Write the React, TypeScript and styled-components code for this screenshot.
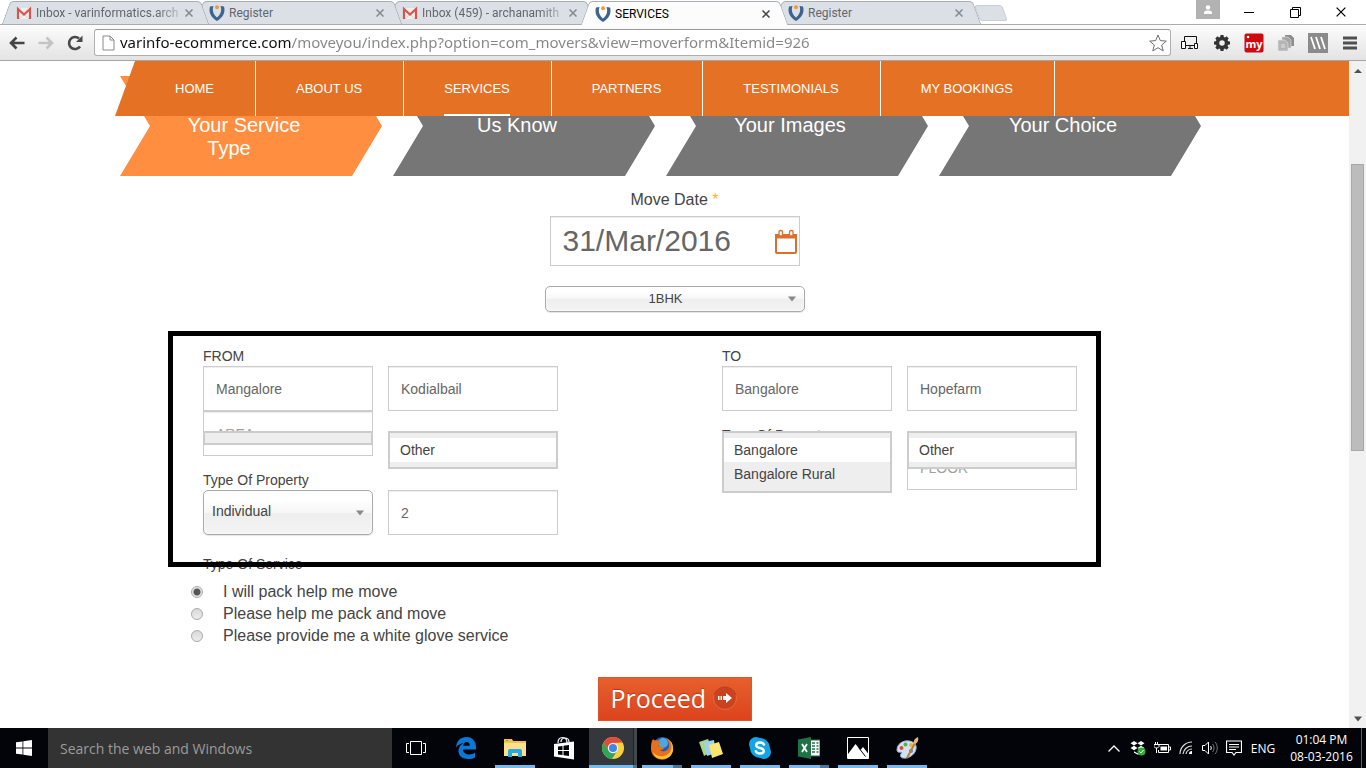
import React from "react";
import styled, { createGlobalStyle, css } from "styled-components";

const UI = `"Open Sans", "Noto Sans", sans-serif`;
const ARIAL = `"Liberation Sans", Arial, sans-serif`;

const GlobalStyle = createGlobalStyle`
  *, *::before, *::after { box-sizing: border-box; }
  body { margin: 0; background: #fff; font-family: ${ARIAL}; color: #444; }
  button, input, select { font: inherit; color: inherit; margin: 0; }
  button { border: 0; padding: 0; background: none; cursor: pointer; }
  svg { display: block; flex: none; }
`;

const Shell = styled.div`
  display: flex;
  flex-direction: column;
  min-height: 100vh;
  overflow: hidden;
`;

/* ---------- browser chrome ---------- */

const TabStrip = styled.div`
  display: flex;
  height: 25px;
  padding-left: 2px;
  background: #fff;
  border-bottom: 1px solid #aaabad;
  font-family: Roboto, sans-serif;
`;

const edge = css`
  content: "";
  position: absolute;
  top: 1px;
  bottom: 0;
  z-index: -1;
  background: var(--tab);
  border: 1px solid #a9adb2;
  border-bottom: 0;
`;

const Tab = styled.div<{ $active?: boolean; $order: number }>`
  --tab: ${(p) => (p.$active ? "#fcfcfc" : "#dbe0e7")};
  position: relative;
  z-index: ${(p) => p.$order};
  display: flex;
  align-items: center;
  flex: 0 1 207px;
  min-width: 0;
  height: ${(p) => (p.$active ? 25 : 24)}px;
  margin-right: -14px;
  padding: 2px 14px 0;
  gap: 4px;
  isolation: isolate;
  font-size: 12px;
  color: ${(p) => (p.$active ? "#000" : "#63666a")};

  &::before {
    ${edge}
    left: 4px;
    width: 60%;
    border-right: 0;
    border-top-left-radius: 4px;
    transform: skewX(-20deg);
  }
  &::after {
    ${edge}
    right: 4px;
    width: 60%;
    border-left: 0;
    border-top-right-radius: 4px;
    transform: skewX(20deg);
  }
`;

const TabTitle = styled.span<{ $fade?: boolean }>`
  flex: 1;
  white-space: nowrap;
  line-height: 16px;
  mask-image: ${(p) => (p.$fade ? "linear-gradient(to right, #000 85%, rgba(0, 0, 0, 0.3))" : "none")};
`;

const TabClose = styled.button`
  display: grid;
  place-items: center;
  width: 16px;
  height: 16px;
`;

const NewTab = styled.button`
  width: 28px;
  height: 16px;
  margin: 5px 0 0 10px;
  background: #dbe0e7;
  border: 1px solid #c9ced5;
  border-radius: 3px;
  transform: skewX(20deg);
`;

const WindowButtons = styled.div`
  display: flex;
  margin: 0 2px 0 auto;
`;

const WindowButton = styled.button`
  display: grid;
  place-items: center;
  width: 46px;
  height: 24px;
`;

const UserBadge = styled.button`
  display: grid;
  place-items: center;
  width: 24px;
  height: 19px;
  margin-right: 6px;
  background: #b2b2b2;
`;

const Toolbar = styled.div`
  display: flex;
  align-items: center;
  height: 36px;
  padding: 0 6px 0 8px;
  background: linear-gradient(#fcfcfc, #e3e3e3);
  border-bottom: 1px solid #a5a5a5;
`;

const NavButtons = styled.div`
  display: flex;
  gap: 11px;
  margin-right: 10px;
`;

const IconButton = styled.button`
  display: grid;
  place-items: center;
  width: 18px;
  height: 20px;
`;

const Omnibox = styled.div`
  display: flex;
  flex: 1;
  align-items: center;
  gap: 5px;
  height: 27px;
  padding: 0 3px 0 7px;
  background: #fff;
  border: 1px solid #b0b0b0;
  border-top-color: #999;
  border-radius: 3px;
`;

const Url = styled.input`
  flex: 1;
  min-width: 0;
  height: 24px;
  padding: 0 0 2px;
  border: 0;
  outline: 0;
  font-family: "Noto Sans", sans-serif;
  font-size: 15px;
  color: transparent;
  background: linear-gradient(to right, #111 171px, #858585 171px);
  -webkit-background-clip: text;
  background-clip: text;
`;

const Extensions = styled.div`
  display: flex;
  gap: 12px;
  margin-left: 9px;
`;

const ExtButton = styled.button`
  display: grid;
  place-items: center;
  width: 20px;
  height: 20px;
`;

/* ---------- page ---------- */

const Viewport = styled.div`
  display: flex;
  flex: 1;
`;

const Page = styled.main`
  flex: 1;
  min-width: 0;
`;

const Scrollbar = styled.div`
  display: flex;
  flex-direction: column;
  align-items: center;
  width: 17px;
  padding: 7px 0 6px;
  background: #f1f1f1;
`;

const Thumb = styled.div`
  flex: 287;
  width: 13px;
  background: #bcbcbc;
  border: 1px solid #a8a8a8;
`;

const Gap = styled.div<{ $share: number }>`
  flex: ${(p) => p.$share};
`;

const SiteNav = styled.nav`
  position: relative;
  z-index: 2;
  display: flex;
  height: 55px;
  margin-left: 115px;
  padding-left: 20px;
  background: #e57125;
  clip-path: polygon(20px 0, 100% 0, 100% 100%, 0 100%);
`;

const NavItem = styled.div`
  padding: 0 41px 0 40px;
  border-right: 1px solid #fff;
`;

const NavLink = styled.a<{ $current?: boolean }>`
  display: block;
  height: 55px;
  font-size: 13px;
  line-height: 55px;
  color: #fff;
  text-decoration: none;
  white-space: nowrap;
  border-bottom: 2px solid ${(p) => (p.$current ? "#fff" : "transparent")};
`;

const Steps = styled.ol`
  display: grid;
  grid-template-columns: repeat(4, 1fr);
  gap: 11px;
  margin: -40px 148px 0 120px;
  padding: 0;
  list-style: none;
`;

const Step = styled.li<{ $current?: boolean }>`
  height: 100px;
  padding: 38px 14px 0 0;
  background: ${(p) => (p.$current ? "#ff8e40" : "#767676")};
  clip-path: polygon(0 0, calc(100% - 30px) 0, 100% 50%, calc(100% - 30px) 100%, 0 100%, 30px 50%);
  font-size: 20px;
  line-height: 23px;
  text-align: center;
  color: #fff;
`;

const StepTail = styled.span`
  display: block;
  padding-right: 30px;
`;

const MoveBlock = styled.div`
  display: flex;
  flex-direction: column;
  align-items: center;
  margin-top: 14px;
`;

const MoveLabel = styled.label`
  font-size: 16px;
  line-height: 20px;
`;

const Required = styled.span`
  color: #ffb02e;
`;

const DateField = styled.div`
  display: flex;
  align-items: center;
  width: 250px;
  height: 50px;
  margin: 6px 0 20px;
  padding: 2px 1px 0 12px;
  background: #fff;
  border: 1px solid #ccc;
  box-shadow: inset 0 1px 1px #eee;
`;

const DateInput = styled.input`
  flex: 1;
  min-width: 0;
  height: 46px;
  padding: 0 0 2px;
  border: 0;
  outline: 0;
  background: transparent;
  font-size: 30px;
  color: #666;
`;

const SelectBox = styled.div<{ $large?: boolean }>`
  display: grid;
  align-items: center;
  width: ${(p) => (p.$large ? "auto" : "260px")};
  height: ${(p) => (p.$large ? 45 : 26)}px;
  background: linear-gradient(#fff 20%, #f6f6f6 50%, #eee 52%, #f4f4f4 100%);
  border: 1px solid #aaa;
  border-radius: 5px;
  box-shadow: inset 0 0 3px #fff, 0 1px 1px rgba(0, 0, 0, 0.1);

  > * { grid-area: 1 / 1; }
  > svg {
    justify-self: end;
    margin-right: 8px;
    pointer-events: none;
  }
`;

const Select = styled.select<{ $center?: boolean }>`
  appearance: none;
  width: 100%;
  height: 24px;
  padding: ${(p) => (p.$center ? "0 18px 2px 0" : "0 20px 4px 8px")};
  border: 0;
  outline: 0;
  background: transparent;
  font-size: ${(p) => (p.$center ? 13 : 14)}px;
  text-align-last: ${(p) => (p.$center ? "center" : "left")};
`;

const RouteFrame = styled.section`
  position: relative;
  z-index: 1;
  display: flex;
  justify-content: space-between;
  margin: 19px 248px 0 168px;
  padding: 10px 19px 27px 30px;
  border: 5px solid #000;
`;

const Place = styled.div`
  display: flex;
  flex-direction: column;
  gap: 14px;
  width: 355px;
`;

const FieldGrid = styled.div`
  display: grid;
  grid-template-columns: 1fr 1fr;
  column-gap: 15px;
`;

const FieldLabel = styled.label`
  grid-column: 1 / -1;
  font-size: 14px;
  line-height: 20px;
`;

const Field = styled.div`
  position: relative;
`;

const TextInput = styled.input`
  display: block;
  width: 100%;
  height: 45px;
  padding: 0 12px;
  background: #fff;
  border: 1px solid #ccc;
  border-radius: 0;
  outline: 0;
  box-shadow: inset 0 1px 1px #eee;
  font-size: 14px;
  color: #666;
  &::placeholder { color: #a0a0a0; }
`;

const Suggestions = styled.ul<{ $empty?: boolean }>`
  position: absolute;
  top: ${(p) => (p.$empty ? 20 : 65)}px;
  left: 0;
  right: 0;
  z-index: 3;
  margin: 0;
  padding: 5px 0;
  list-style: none;
  background: #eee;
  border: 2px solid #ccc;
`;

const Suggestion = styled.li<{ $hot?: boolean }>`
  padding: 0 10px;
  background: ${(p) => (p.$hot ? "#fff" : "#eee")};
  font-size: 14px;
  line-height: 24px;
  color: #444;
`;

const ServiceGroup = styled.fieldset`
  display: flex;
  flex-direction: column;
  min-width: 0;
  margin: -13px 248px 0 168px;
  padding: 0 0 0 23px;
  border: 0;
`;

const ServiceTitle = styled.legend`
  padding: 0 0 7px 12px;
  font-size: 14px;
  line-height: 20px;
`;

const RadioRow = styled.label`
  display: flex;
  align-items: center;
  gap: 20px;
  font-size: 16px;
  line-height: 22px;
`;

const Radio = styled.input`
  appearance: none;
  width: 12px;
  height: 12px;
  border: 1px solid #aaa;
  border-radius: 50%;
  background: linear-gradient(#d9d9d9, #ececec);
  &:checked {
    background: radial-gradient(circle, #555 0 3px, #e4e4e4 4px);
  }
`;

const Proceed = styled.button`
  display: flex;
  align-items: center;
  gap: 6px;
  width: 154px;
  height: 44px;
  margin: 30px auto 7px;
  padding: 0 0 2px 12px;
  background: linear-gradient(#e6602c, #dc431e);
  border: 1px solid #e0562c;
  font-family: ${UI};
  font-size: 25px;
  line-height: 40px;
  color: #fff;
  text-shadow: 0 -1px 1px #b4371a;
`;

/* ---------- taskbar ---------- */

const Taskbar = styled.footer`
  display: flex;
  height: 40px;
  background: #02040a;
  font-family: ${UI};
  color: #fff;
`;

const TaskButton = styled.button<{ $running?: boolean; $active?: boolean; $stacked?: boolean }>`
  display: flex;
  flex-direction: column;
  align-items: center;
  justify-content: flex-start;
  width: 48px;
  height: 40px;
  margin-right: 1px;
  background: ${(p) => (p.$active ? "linear-gradient(to right, #34373c 44px, #1d2024 44px 45px, #43474c 45px)" : "none")};
  &::after {
    content: "";
    width: ${(p) => (p.$active ? 48 : 40)}px;
    height: 3px;
    background: ${(p) =>
      !p.$running
        ? "none"
        : p.$stacked
        ? "linear-gradient(to right, #76b9ed 31px, #4b7698 31px)"
        : p.$active
        ? "linear-gradient(to right, #76b9ed 44px, #4b7698 44px)"
        : "#76b9ed"};
  }
`;

const TaskIcon = styled.span`
  display: grid;
  place-items: center;
  width: 26px;
  height: 26px;
  margin: 7px 0 4px;
`;

const StartButton = styled.button`
  display: grid;
  place-items: center;
  width: 48px;
`;

const Search = styled.input`
  flex: 0 1 344px;
  min-width: 0;
  padding: 0 12px;
  border: 0;
  outline: 0;
  background: #333;
  font-size: 14px;
  &::placeholder { color: #9b9b9b; }
`;

const TaskView = styled.button`
  display: grid;
  place-items: center;
  width: 48px;
  margin-right: 2px;
`;

const Tray = styled.div`
  display: flex;
  align-items: center;
  margin-left: auto;
`;

const TrayButton = styled.button`
  display: grid;
  place-items: center;
  width: 24px;
  height: 40px;
`;

const Language = styled.button`
  width: 34px;
  font-size: 12px;
  text-align: center;
`;

const Clock = styled.div`
  width: 79px;
  margin-left: 2px;
  font-size: 12px;
  line-height: 17px;
  text-align: center;
`;

const ShowDesktop = styled.button`
  width: 5px;
  height: 40px;
  border-left: 1px solid #5c5f64;
`;

/* ---------- drawings ---------- */

const Gmail = () => (
  <svg width="16" height="16" viewBox="0 0 16 16">
    <rect x="1" y="3" width="14" height="11" rx="1" fill="#f0efee" />
    <path d="M3 14 8 9l5 5" fill="none" stroke="#d5d3d2" />
    <path d="M2 14V4l6 5.5L14 4v10" fill="none" stroke="#d8554a" strokeWidth="2.2" />
  </svg>
);

const Mover = () => (
  <svg width="16" height="16" viewBox="0 0 16 16">
    <path d="M1 1.500 4.500 1C3 5 4 9.500 8 12.500c4-3 5-7.500 3.500-11.500L15 1.500C16.800 7.500 13.500 13 8 16 2.500 13-.8 7.500 1 1.500z" fill="#3f638f" />
    <circle cx="8" cy="2.300" r="2" fill="#f6963a" />
  </svg>
);

const Cross = ({ c = "#85888c", s = 8 }: { c?: string; s?: number }) => (
  <svg width={s} height={s} viewBox="0 0 8 8">
    <path d="M.5.5l7 7M7.500.5l-7 7" stroke={c} strokeWidth={s > 8 ? 1 : 1.5} />
  </svg>
);

const Triangle = ({ up, c = "#888" }: { up?: boolean; c?: string }) => (
  <svg width="8" height="6" viewBox="0 0 8 6">
    <path d={up ? "M0 5h8L4 1z" : "M0 .5h8L4 5.500z"} fill={c} />
  </svg>
);

const CalendarIcon = () => (
  <svg width="24" height="26" viewBox="0 0 24 26">
    <rect x="2" y="6" width="20" height="18" rx="1" fill="#fff" stroke="#d9702f" strokeWidth="2" />
    <path d="M1 5h22v4.500H1z" fill="#d9702f" />
    <rect x="5" y="1.500" width="3.500" height="5.500" rx="1.500" fill="#fff" stroke="#d9702f" strokeWidth="1.300" />
    <rect x="15.500" y="1.500" width="3.500" height="5.500" rx="1.500" fill="#fff" stroke="#d9702f" strokeWidth="1.300" />
  </svg>
);

const ProceedArrow = () => (
  <svg width="26" height="26" viewBox="0 0 26 26">
    <circle cx="13" cy="13" r="11.500" fill="#cb4220" stroke="#e8693f" />
    <path d="M2 10a11.500 11.500 0 0 1 22 0" fill="none" stroke="#b93a1b" />
    <path d="M6 11h1.500v4H6zM8.500 11H10v4H8.500zM11 11h3V8l6 5-6 5v-3h-3z" fill="#fff" />
  </svg>
);

const gearTeeth = [0, 45, 90, 135, 180, 225, 270, 315];
const Gear = () => (
  <svg width="18" height="18" viewBox="0 0 18 18">
    {gearTeeth.map((a) => (
      <path key={a} d="M7 4.500 7.500 1h3L11 4.500z" fill="#333" transform={`rotate(${a} 9 9)`} />
    ))}
    <circle cx="9" cy="9" r="4.500" fill="none" stroke="#333" strokeWidth="3.500" />
  </svg>
);

const Edge = () => (
  <svg width="22" height="24" viewBox="0 0 22 24">
    <path d="M1 11.500C1.500 5 5.500 1 11.500 1 17.500 1 21 5.500 21 11v2.500H8c.2 3.500 3 5 6 5 2.200 0 4.200-.6 6-1.700v4.700c-2 1.100-4.300 1.500-6.700 1.500C7 23 3.500 19.500 3.500 15c0-3.500 2-6.400 5.200-7.800C5.500 7.200 2.500 8.800 1 11.500zM8.200 9.700h6.600C14.800 7.500 13.700 6 11.600 6 9.800 6 8.600 7.400 8.200 9.700z" fill="#0a78d6" />
  </svg>
);

const Explorer = () => (
  <svg width="22" height="20" viewBox="0 0 22 20">
    <path d="M0 1h8l1 2h13v15H0z" fill="#f2c24c" />
    <path d="M0 5h22v13H0z" fill="#fde08b" />
    <path d="M2 2h2v1H2z" fill="#5bb05a" />
    <path d="M4 19v-6c0-1.500 1-2 2-2h10c1.500 0 2 1 2 2v6h-4v-4H8v4z" fill="#27a9e8" />
  </svg>
);

const Store = () => (
  <svg width="22" height="24" viewBox="0 0 22 24">
    <path d="M5 7c0-4 2-5.500 4.500-5.500S14 3 14 7M8 6c0-3 2-4 4-4 2.500 0 4 2 4 4" fill="none" stroke="#fff" strokeWidth="1.200" />
    <path d="M1 8 21 5.500v18L1 20.500z" fill="#fff" />
    <path d="M5 10.500 9.500 10v4H5zM10.500 9.800 16 9v5h-5.500zM5 15h4.500v4L5 18.500zM10.500 15H16v5l-5.500-.8z" fill="#02040a" />
  </svg>
);

const Chrome = () => (
  <svg width="22" height="22" viewBox="0 0 22 22">
    <circle cx="11" cy="11" r="11" fill="#f8cf3c" />
    <path d="M1.500 5.500A11 11 0 0 1 20.500 5.500L11 6 6.700 13.500z" fill="#e04b3e" />
    <path d="M1.500 5.500A11 11 0 0 0 10 22l5.300-8.500-8.600 0z" fill="#2fa45a" />
    <circle cx="11" cy="11" r="5.200" fill="#f4f4f4" />
    <circle cx="11" cy="11" r="4" fill="#4285e8" />
  </svg>
);

const Firefox = () => (
  <svg width="24" height="24" viewBox="0 0 24 24">
    <circle cx="12.500" cy="11" r="10" fill="#1d5fb4" />
    <circle cx="13" cy="7" r="5" fill="#4fa6e0" />
    <path d="M3 3c1 1 2 1.500 3.500 1.500 2-.5 3 .5 4 2L8 10c2 1 5 0 6 2-1 2-3 2-4 2 3 3 8 1 9-3 .5-4-1-7-3-9 5 2 7 6 7 10.500A11 11 0 0 1 1 13c0-4 0-7 2-10z" fill="#e8701c" />
    <path d="M20 5c3 5 2 13-6 15-5 1-9-1-11-4 1 5 5 7 9.500 7C19 23 24 18 23 11c-.5-3-1.500-5-3-6z" fill="#f9c12e" />
  </svg>
);

const Notes = () => (
  <svg width="24" height="22" viewBox="0 0 24 22">
    <path d="M0 5 9 2l5 12-9 5z" fill="#a8d884" />
    <path d="m5 5 10-2 2 13-9 3z" fill="#9fd0f2" />
    <path d="m10 8 10-3 4 12-11 4z" fill="#fbe571" />
  </svg>
);

const Skype = () => (
  <svg width="24" height="24" viewBox="0 0 24 24">
    <circle cx="8" cy="8" r="7" fill="#12a5e5" />
    <circle cx="16" cy="16" r="7" fill="#12a5e5" />
    <circle cx="12" cy="12" r="10" fill="#12a5e5" />
    <path d="M16 8.500C15 7 13.500 6.500 12 6.500c-2.200 0-3.800 1-3.800 2.700 0 3.800 7.600 1.800 7.600 5.500 0 1.800-1.700 2.800-3.900 2.800-1.900 0-3.400-.8-4.100-2.300" fill="none" stroke="#fff" strokeWidth="2.400" strokeLinecap="round" />
  </svg>
);

const Excel = () => (
  <svg width="22" height="22" viewBox="0 0 22 22">
    <path d="M12 3h10v16H12z" fill="#fff" stroke="#1f7245" />
    <path d="M14 6h3M18.500 6h2M14 9h3M18.500 9h2M14 12h3M18.500 12h2M14 15h3M18.500 15h2" stroke="#1f7245" strokeWidth="1.500" />
    <path d="M0 2.500 13 0v22L0 19.500z" fill="#1f7245" />
    <path d="m4 7 5 8M9 7l-5 8" stroke="#fff" strokeWidth="1.800" />
  </svg>
);

const Photos = () => (
  <svg width="22" height="22" viewBox="0 0 22 22">
    <path d="M.5.5h21v21H.5z" fill="#02040a" stroke="#fff" />
    <path d="M1 17 8.500 7l5 6 2.500-3 5.500 7v4.500H1z" fill="#fff" />
    <path d="m11.500 10.500 7 9" stroke="#02040a" />
  </svg>
);

const Paint = () => (
  <svg width="24" height="24" viewBox="0 0 24 24">
    <path d="M2 14C2 8 8 4 14 5c5 .5 8 4 7 8-1 6-8 10-13 9-3-.5-3-3-1.500-5C8 15 2 18 2 14z" fill="#cfe3f2" stroke="#8eb4cf" />
    <circle cx="6.500" cy="12" r="2" fill="#e2483a" />
    <circle cx="10.500" cy="8.500" r="2" fill="#57b04a" />
    <circle cx="16" cy="9" r="2" fill="#f0b62e" />
    <circle cx="16" cy="15" r="2" fill="#4a86d8" />
    <path d="m12 22 8-15" stroke="#c17a32" strokeWidth="2" />
    <path d="M18.500 7c0-3 2-5 4.500-6 .8 3 0 5-2.500 7z" fill="#e9b978" />
  </svg>
);

/* ---------- data ---------- */

const tabs = [
  { title: "Inbox - varinformatics.arch", Icon: Gmail, fade: true },
  { title: "Register", Icon: Mover },
  { title: "Inbox (459) - archanamith", Icon: Gmail, fade: true },
  { title: "SERVICES", Icon: Mover, active: true },
  { title: "Register", Icon: Mover },
];

const navLinks = ["HOME", "ABOUT US", "SERVICES", "PARTNERS", "TESTIMONIALS", "MY BOOKINGS"];

const services = [
  "I will pack help me move",
  "Please help me pack and move",
  "Please provide me a white glove service",
];

const apps = [
  { name: "Edge", Icon: Edge },
  { name: "File Explorer", Icon: Explorer, running: true },
  { name: "Store", Icon: Store },
  { name: "Chrome", Icon: Chrome, running: true, active: true },
  { name: "Firefox", Icon: Firefox, running: true, stacked: true },
  { name: "Sticky Notes", Icon: Notes, running: true },
  { name: "Skype", Icon: Skype, running: true },
  { name: "Excel", Icon: Excel, running: true, stacked: true },
  { name: "Photos", Icon: Photos, running: true },
  { name: "Paint", Icon: Paint, running: true },
];

type AddressProps = { name: string; value?: string; placeholder?: string; options?: string[] };

const AddressField = ({ name, value, placeholder, options }: AddressProps) => (
  <Field>
    <TextInput id={name} aria-label={name} defaultValue={value} placeholder={placeholder} />
    {options && (
      <Suggestions $empty={options.length === 0}>
        {options.map((o, i) => (
          <Suggestion key={o} $hot={i === 0}>{o}</Suggestion>
        ))}
      </Suggestions>
    )}
  </Field>
);

const PropertySelect = ({ id }: { id: string }) => (
  <SelectBox $large>
    <Select id={id} defaultValue="Individual">
      <option>Individual</option>
    </Select>
    <Triangle />
  </SelectBox>
);

export default function App() {
  return (
    <Shell>
      <GlobalStyle />
      <TabStrip>
        {tabs.map(({ title, Icon, active, fade }, i) => (
          <Tab key={i} $active={active} $order={active ? 9 : 6 - i}>
            <Icon />
            <TabTitle $fade={fade}>{title}</TabTitle>
            <TabClose aria-label="Close tab"><Cross c={active ? "#444" : undefined} /></TabClose>
          </Tab>
        ))}
        <NewTab aria-label="New tab" />
        <WindowButtons>
          <UserBadge aria-label="Profile">
            <svg width="10" height="10" viewBox="0 0 10 10">
              <circle cx="5" cy="2.500" r="2.200" fill="#fff" />
              <path d="M1 9V7.500C1 6 3 5.500 5 5.500s4 .5 4 2V9z" fill="#fff" />
            </svg>
          </UserBadge>
          <WindowButton aria-label="Minimize">
            <svg width="10" height="10"><path d="M0 5.500h10" stroke="#000" /></svg>
          </WindowButton>
          <WindowButton aria-label="Restore">
            <svg width="11" height="11"><path d="M.5 2.500h8v8h-8zM2.500 2V.5h8v8H9" fill="none" stroke="#000" /></svg>
          </WindowButton>
          <WindowButton aria-label="Close"><Cross c="#000" s={10} /></WindowButton>
        </WindowButtons>
      </TabStrip>

      <Toolbar>
        <NavButtons>
          <IconButton aria-label="Back">
            <svg width="16" height="14" viewBox="0 0 16 14">
              <path d="M7.500 1.500 2 7l5.500 5.500M2 7h13.500" fill="none" stroke="#444" strokeWidth="2.600" />
            </svg>
          </IconButton>
          <IconButton aria-label="Forward">
            <svg width="16" height="14" viewBox="0 0 16 14">
              <path d="M8.500 1.500 14 7l-5.500 5.500M14 7H.5" fill="none" stroke="#c4c4c4" strokeWidth="2.600" />
            </svg>
          </IconButton>
          <IconButton aria-label="Reload">
            <svg width="16" height="16" viewBox="0 0 16 16">
              <path d="M13 11.500A6 6 0 1 1 12 3.500" fill="none" stroke="#484848" strokeWidth="2.600" />
              <path d="M15.500.5V7H9z" fill="#484848" />
            </svg>
          </IconButton>
        </NavButtons>
        <Omnibox>
          <svg width="13" height="16" viewBox="0 0 13 16">
            <path d="M1 1h7l4 4v10H1zM8 1v4h4" fill="#fff" stroke="#8a8a8a" />
          </svg>
          <Url
            aria-label="Address"
            defaultValue="varinfo-ecommerce.com/moveyou/index.php?option=com_movers&view=moverform&Itemid=926"
          />
          <svg width="18" height="18" viewBox="0 0 18 18">
            <path d="m9 1 2.300 5.600 6 .5-4.600 3.900 1.500 5.900L9 13.700l-5.200 3.200L5.300 11 .7 7.100l6-.5z" fill="#fff" stroke="#6d6d6d" />
          </svg>
        </Omnibox>
        <Extensions>
          <ExtButton aria-label="Devices">
            <svg width="18" height="14" viewBox="0 0 18 14">
              <path d="M3.500 5V.5h12V7M5 9.500h8M7 12.500h5M9 10v2" fill="none" stroke="#111" />
              <path d="M.5 5.500h4v7h-4zM13.500 7.500h3v5h-3z" fill="#fff" stroke="#111" />
            </svg>
          </ExtButton>
          <ExtButton aria-label="Settings"><Gear /></ExtButton>
          <ExtButton aria-label="my">
            <svg width="20" height="20" viewBox="0 0 20 20">
              <rect width="19" height="19" x=".5" y=".5" rx="2" fill="#cf0a0f" />
              <circle cx="4" cy="4" r="1.300" fill="#fff" />
              <text x="10" y="15" textAnchor="middle" fontFamily={UI} fontSize="11" fontWeight="700" fill="#fff">my</text>
            </svg>
          </ExtButton>
          <ExtButton aria-label="Pages">
            <svg width="18" height="18" viewBox="0 0 18 18">
              <path d="M8 1h6l3 3v8H8z" fill="#8d8d8d" />
              <path d="M5 3h6l3 3v8H5z" fill="#a5a5a5" stroke="#ddd" strokeWidth=".6" />
              <path d="M1 6h7l3 3v8H1z" fill="#b5b5b5" stroke="#e6e6e6" strokeWidth=".6" />
              <path d="M4 10h4v4H4z" fill="#ccc" />
            </svg>
          </ExtButton>
          <ExtButton aria-label="Stripes">
            <svg width="20" height="20" viewBox="0 0 20 20">
              <path d="M0 0h20v20H0z" fill="#8b8b8b" />
              <path d="m3 4 4 12M8 4l4 12M13 4l4 12" stroke="#fff" strokeWidth="1.800" />
            </svg>
          </ExtButton>
          <ExtButton aria-label="Menu">
            <svg width="14" height="14"><path d="M0 2h14M0 7h14M0 12h14" stroke="#505050" strokeWidth="3" /></svg>
          </ExtButton>
        </Extensions>
      </Toolbar>

      <Viewport>
        <Page>
          <SiteNav>
            {navLinks.map((n) => (
              <NavItem key={n}>
                <NavLink href="#" $current={n === "SERVICES"}>{n}</NavLink>
              </NavItem>
            ))}
          </SiteNav>
          <Steps>
            <Step $current>Your Service<StepTail>Type</StepTail></Step>
            <Step>Us Know</Step>
            <Step>Your Images</Step>
            <Step>Your Choice</Step>
          </Steps>

          <MoveBlock>
            <MoveLabel htmlFor="date">Move Date <Required>*</Required></MoveLabel>
            <DateField>
              <DateInput id="date" defaultValue="31/Mar/2016" />
              <CalendarIcon />
            </DateField>
            <SelectBox>
              <Select $center aria-label="Home size" defaultValue="1BHK">
                <option>1BHK</option>
              </Select>
              <Triangle />
            </SelectBox>
          </MoveBlock>

          <RouteFrame>
            <Place>
              <FieldGrid>
                <FieldLabel htmlFor="from-city">FROM</FieldLabel>
                <AddressField name="from-city" value="Mangalore" />
                <AddressField name="from-area" value="Kodialbail" options={["Other"]} />
                <AddressField name="from-other-area" placeholder="AREA" options={[]} />
              </FieldGrid>
              <FieldGrid>
                <FieldLabel htmlFor="from-type">Type Of Property</FieldLabel>
                <PropertySelect id="from-type" />
                <AddressField name="from-floor" value="2" />
              </FieldGrid>
            </Place>
            <Place>
              <FieldGrid>
                <FieldLabel htmlFor="to-city">TO</FieldLabel>
                <AddressField name="to-city" value="Bangalore" options={["Bangalore", "Bangalore Rural"]} />
                <AddressField name="to-area" value="Hopefarm" options={["Other"]} />
              </FieldGrid>
              <FieldGrid>
                <FieldLabel htmlFor="to-type">Type Of Property</FieldLabel>
                <PropertySelect id="to-type" />
                <AddressField name="to-floor" placeholder="FLOOR" />
              </FieldGrid>
            </Place>
          </RouteFrame>

          <ServiceGroup>
            <ServiceTitle>Type Of Service</ServiceTitle>
            {services.map((s, i) => (
              <RadioRow key={s}>
                <Radio type="radio" name="service" defaultChecked={i === 0} />
                {s}
              </RadioRow>
            ))}
          </ServiceGroup>

          <Proceed>
            Proceed
            <ProceedArrow />
          </Proceed>
        </Page>
        <Scrollbar>
          <Triangle up c="#505050" />
          <Gap $share={90} />
          <Thumb />
          <Gap $share={266} />
          <Triangle c="#505050" />
        </Scrollbar>
      </Viewport>

      <Taskbar>
        <StartButton aria-label="Start">
          <svg width="16" height="16" viewBox="0 0 16 16">
            <path d="M0 2.300 6.500 1.400v6.200H0zM7.300 1.200 16 0v7.600H7.300zM0 8.400h6.500v6.200L0 13.700zM7.300 8.400H16V16l-8.700-1.200z" fill="#fff" />
          </svg>
        </StartButton>
        <Search aria-label="Search" placeholder="Search the web and Windows" />
        <TaskView aria-label="Task view">
          <svg width="20" height="14" viewBox="0 0 20 14">
            <path d="M4.500.5h11v13h-11zM3 2.500H.5v9H3M17 2.500h2.500v9H17" fill="none" stroke="#fff" />
          </svg>
        </TaskView>
        {apps.map(({ name, Icon, running, active, stacked }) => (
          <TaskButton key={name} aria-label={name} $running={running} $active={active} $stacked={stacked}>
            <TaskIcon><Icon /></TaskIcon>
          </TaskButton>
        ))}
        <Tray>
          <TrayButton aria-label="Show hidden icons">
            <svg width="12" height="7"><path d="m.5 6.500 5.500-5.500 5.500 5.500" fill="none" stroke="#fff" strokeWidth="1.300" /></svg>
          </TrayButton>
          <TrayButton aria-label="Dropbox">
            <svg width="16" height="16" viewBox="0 0 16 16">
              <path d="m4 1 3.500 2.200L4 5.500.5 3.200zM11 1l3.500 2.200L11 5.500 7.500 3.200zM4 5.800l3.500 2.200L4 10.300.5 8zM11 5.800 14.500 8 11 10.300 7.500 8zM4 11.300l3.500 2 1-.8V15L4 12.800z" fill="#fff" />
              <circle cx="11.500" cy="11.500" r="4" fill="#2fae3c" />
              <path d="m9.500 11.500 1.500 1.500 2.500-3" fill="none" stroke="#fff" />
            </svg>
          </TrayButton>
          <TrayButton aria-label="Battery">
            <svg width="17" height="12" viewBox="0 0 17 12">
              <path d="M5 2.500h9.500v8h-10V8M15 5h1.500v3H15" fill="none" stroke="#fff" />
              <path d="M6.500 4.500H13v4H6.500z" fill="#fff" />
              <path d="M1.500 0v2M3.500 0v2M0 2.500h5v2L3.500 6h-2L0 4.500zM2.500 6v5" fill="none" stroke="#fff" />
            </svg>
          </TrayButton>
          <TrayButton aria-label="Network">
            <svg width="14" height="14" viewBox="0 0 14 14">
              <path d="M1 13A12 12 0 0 1 13 1M4 13a9 9 0 0 1 9-8M7 13a6 6 0 0 1 6-5" fill="none" stroke="#ddd" strokeWidth="1.200" />
              <path d="M10 13a3 3 0 0 1 3-3v3z" fill="#fff" />
            </svg>
          </TrayButton>
          <TrayButton aria-label="Volume">
            <svg width="16" height="14" viewBox="0 0 16 14">
              <path d="M.5 4.500H3L6.500 1v12L3 9.500H.5z" fill="none" stroke="#fff" />
              <path d="M8.500 5c1 1 1 3 0 4" fill="none" stroke="#fff" />
              <path d="M10.500 3c2 2 2 6 0 8M13 1c3 3 3 9 0 12" fill="none" stroke="#777" />
            </svg>
          </TrayButton>
          <TrayButton aria-label="Notifications">
            <svg width="16" height="16" viewBox="0 0 16 16">
              <path d="M.5 1h15v11.500H10L8 15l-2-2.500H.5z" fill="none" stroke="#fff" strokeWidth="1.200" />
              <path d="M3 4.500h10M3 7h10M3 9.500h7" stroke="#fff" />
            </svg>
          </TrayButton>
          <Language>ENG</Language>
          <Clock>
            <div>01:04 PM</div>
            <div>08-03-2016</div>
          </Clock>
          <ShowDesktop aria-label="Show desktop" />
        </Tray>
      </Taskbar>
    </Shell>
  );
}
